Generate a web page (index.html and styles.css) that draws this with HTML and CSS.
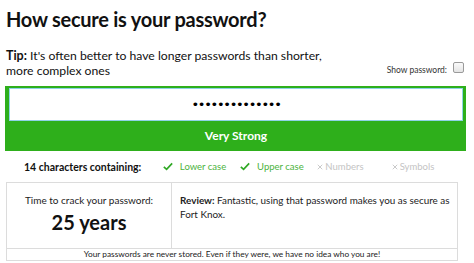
FILE: index.html
```html
<!DOCTYPE html>
<html>
<head>
<meta charset="utf-8">
<link rel="stylesheet" href="styles.css">
</head>
<body>
<div class="page">
  <h1 class="title">How secure is your password?</h1>
  <div class="tip-row">
    <p class="tip"><b>Tip:</b> It's often better to have longer passwords than shorter, more complex ones</p>
    <label class="show">Show password: <span class="box"></span></label>
  </div>
  <div class="meter">
    <div class="field"><input class="pw" type="password" value="abcdefghijklmn" readonly></div>
    <div class="strength">Very Strong</div>
  </div>
  <div class="contains">
    <span class="count">14 characters containing:</span>
    <span class="item ok"><svg viewBox="0 0 12 10" class="ico"><path d="M1 5.5 L4.3 8.5 L11 1.2" fill="none" stroke="#2fa823" stroke-width="2"/></svg>Lower case</span>
    <span class="item ok"><svg viewBox="0 0 12 10" class="ico"><path d="M1 5.5 L4.3 8.5 L11 1.2" fill="none" stroke="#2fa823" stroke-width="2"/></svg>Upper case</span>
    <span class="item no"><svg viewBox="0 0 8 8" class="x"><path d="M1 1 L7 7 M7 1 L1 7" stroke="#c4c4c4" stroke-width="1.2"/></svg>Numbers</span>
    <span class="item no"><svg viewBox="0 0 8 8" class="x"><path d="M1 1 L7 7 M7 1 L1 7" stroke="#c4c4c4" stroke-width="1.2"/></svg>Symbols</span>
  </div>
  <div class="results">
    <div class="crack">
      <div class="crack-label">Time to crack your password:</div>
      <div class="crack-time">25 years</div>
    </div>
    <div class="review"><b>Review:</b> Fantastic, using that password makes you as secure as Fort Knox.</div>
    <div class="note">Your passwords are never stored. Even if they were, we have no idea who you are!</div>
  </div>
</div>
</body>
</html>
```
FILE: styles.css
```css
html, body {
  margin: 0;
  padding: 0;
  background: #fff;
}
body {
  font-family: Lato, "Open Sans", sans-serif;
  color: #111;
}
.page {
  padding: 0 8px 0 5px;
}
.title {
  margin: 0;
  padding: 7px 0 0 1px;
  font-size: 20px;
  line-height: 24px;
  font-weight: 700;
  letter-spacing: -0.25px;
}
.tip-row {
  display: flex;
  justify-content: space-between;
  align-items: flex-end;
  margin-top: 17px;
}
.tip {
  margin: 0 0 0 1px;
  width: 330px;
  font-size: 12.2px;
  line-height: 15px;
}
.tip b {
  font-size: 12.5px;
}
.show {
  display: flex;
  align-items: center;
  gap: 6px;
  font-size: 8.5px;
  color: #333;
  padding-bottom: 3px;
  margin-right: 2px;
}
.box {
  width: 9px;
  height: 9px;
  border: 1px solid #9a9a9a;
  border-radius: 2px;
  background: linear-gradient(#fafafa, #e4e4e4);
  margin-top: -5px;
}
.meter {
  margin-top: 8px;
  width: 461px;
  background: #2eaf1b;
  padding: 2px 3px 0 4px;
  box-sizing: border-box;
}
.field {
  height: 33px;
  background: #fff;
  border: 1px solid #8fd2e6;
  box-sizing: border-box;
  display: flex;
}
.pw {
  width: 100%;
  border: none;
  outline: none;
  background: transparent;
  text-align: center;
  font-family: "DejaVu Sans", sans-serif;
  font-size: 13px;
  letter-spacing: -1.3px;
  color: #000;
  padding: 0;
}
.strength {
  height: 30px;
  line-height: 30px;
  text-align: center;
  color: #fff;
  font-weight: 700;
  font-size: 12px;
}
.contains {
  display: flex;
  align-items: center;
  height: 31px;
  font-size: 9.5px;
}
.count {
  font-weight: 700;
  font-size: 10.5px;
  margin-left: 19px;
  width: 142px;
}
.item {
  display: flex;
  align-items: center;
}
.ok {
  color: #4cb33d;
  width: 79px;
}
.ok .ico {
  width: 10px;
  height: 9px;
  margin-right: 7px;
}
.no {
  color: #c4c4c4;
  width: 76px;
}
.no .x {
  width: 6px;
  height: 6px;
  margin-right: 2px;
}
.results {
  display: grid;
  grid-template-columns: 165px 1fr;
  width: 452px;
  margin-left: 1px;
  border: 1px solid #dcdcdc;
  box-sizing: border-box;
}
.crack {
  border-right: 1px solid #dcdcdc;
  border-bottom: 1px solid #dcdcdc;
  text-align: center;
  height: 66px;
  box-sizing: border-box;
  padding-top: 11px;
}
.crack-label {
  font-size: 10px;
  line-height: 13px;
  color: #222;
}
.crack-time {
  font-size: 20px;
  font-weight: 700;
  line-height: 24px;
  margin-top: 3px;
}
.review {
  border-bottom: 1px solid #dcdcdc;
  font-size: 9.9px;
  line-height: 13.5px;
  padding: 11px 4px 0 8px;
  color: #222;
}
.note {
  grid-column: 1 / 3;
  text-align: center;
  font-size: 8.3px;
  line-height: 11px;
  color: #222;
}
```
